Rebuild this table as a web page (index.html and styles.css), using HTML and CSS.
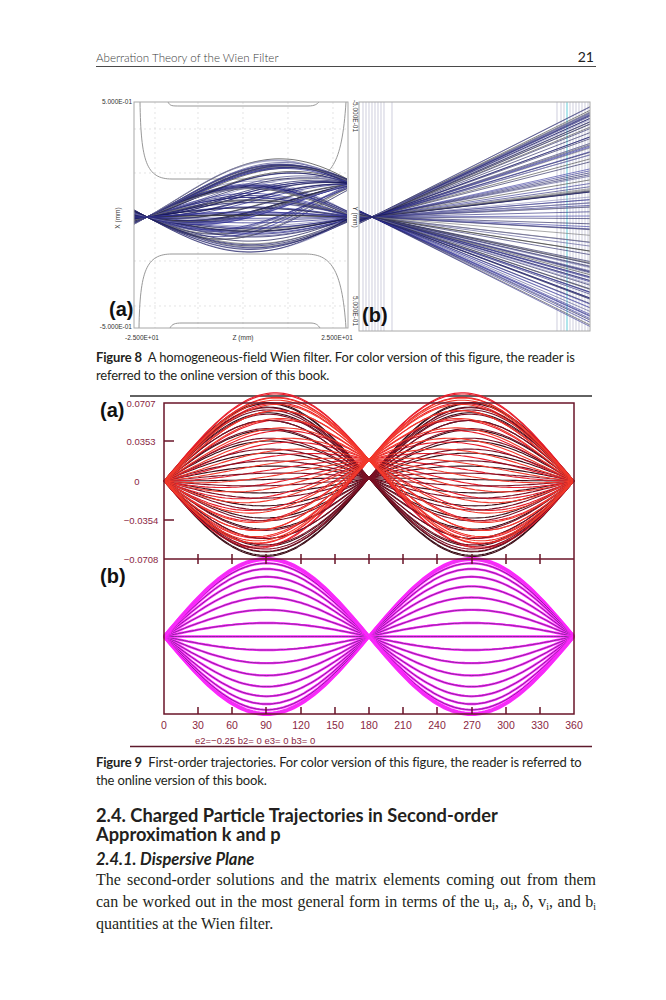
FILE: index.html
```html
<!DOCTYPE html>
<html>
<head>
<meta charset="utf-8">
<title>Aberration Theory of the Wien Filter</title>
<link rel="stylesheet" href="styles.css">
</head>
<body>
<div class="page">
  <header class="running-head">
    <span class="running-title">Aberration Theory of the Wien Filter</span>
    <span class="folio">21</span>
  </header>

  <figure class="figure fig8">
    <svg class="plot plot8" width="500" height="250" viewBox="96 96 500 250" xmlns="http://www.w3.org/2000/svg">
      <!-- (a) left plot -->
      <g class="grid">
        <line x1="155" y1="101" x2="155" y2="327"/>
        <line x1="198" y1="101" x2="198" y2="327"/>
        <line x1="243" y1="101" x2="243" y2="327"/>
        <line x1="288" y1="101" x2="288" y2="327"/>
        <line x1="333" y1="101" x2="333" y2="327"/>
        <line x1="134" y1="128" x2="348" y2="128"/>
        <line x1="134" y1="172" x2="348" y2="172"/>
        <line x1="134" y1="260" x2="348" y2="260"/>
        <line x1="134" y1="305" x2="348" y2="305"/>
      </g>
      <g class="poles">
        <path d="M140,101 C141,160 146,178 172,178 L305,178 C330,178 342,165 346,101"/>
        <path d="M139,327 C140,270 146,253 172,253 L305,253 C330,253 342,266 346,327"/>
        <path d="M168,101 C170,105 172,105 180,105 L308,105 C315,105 317,103 319,101"/>
        <path d="M170,327 C172,323 175,322 182,322 L310,322 C316,322 318,324 320,327"/>
      </g>
      <g id="f8a-traj"></g>
      <rect class="frame8" x="134" y="101" width="214" height="226"/>
      <text class="axlab" x="132" y="102.5" text-anchor="end">5.000E-01</text>
      <text class="axlab" x="132" y="328" text-anchor="end">-5.000E-01</text>
      <text class="axlab" x="142" y="339" text-anchor="middle">-2.500E+01</text>
      <text class="axlab" x="243" y="339" text-anchor="middle">Z (mm)</text>
      <text class="axlab" x="337" y="339" text-anchor="middle">2.500E+01</text>
      <text class="axlab" transform="translate(120,217) rotate(-90)" text-anchor="middle">X (mm)</text>
      <text class="panel" x="109" y="315">(a)</text>

      <!-- (b) right plot -->
      <g class="vlines">
        <line x1="363" y1="101" x2="363" y2="330"/>
        <line x1="366" y1="101" x2="366" y2="330"/>
        <line x1="369" y1="101" x2="369" y2="330"/>
        <line x1="372" y1="101" x2="372" y2="330"/>
        <line x1="375" y1="101" x2="375" y2="330"/>
        <line x1="378" y1="101" x2="378" y2="330"/>
        <line x1="381" y1="101" x2="381" y2="330"/>
        <line x1="384" y1="101" x2="384" y2="330"/>
        <line x1="392" y1="101" x2="392" y2="330"/>
        <line x1="557" y1="101" x2="557" y2="330"/>
        <line x1="561" y1="101" x2="561" y2="330"/>
        <line x1="564" y1="101" x2="564" y2="330"/>
        <line class="cyan" x1="567" y1="101" x2="567" y2="330"/>
        <line x1="570" y1="101" x2="570" y2="330"/>
        <line x1="573" y1="101" x2="573" y2="330"/>
        <line x1="576" y1="101" x2="576" y2="330"/>
        <line x1="579" y1="101" x2="579" y2="330"/>
        <line x1="582" y1="101" x2="582" y2="330"/>
        <line x1="585" y1="101" x2="585" y2="330"/>
        <line x1="588" y1="101" x2="588" y2="330"/>
      </g>
      <g id="f8b-traj"></g>
      <rect class="frame8" x="359" y="101" width="231" height="229"/>
      <text class="axlab" transform="translate(353,115) rotate(90)" text-anchor="middle">-5.000E-01</text>
      <text class="axlab" transform="translate(353,216) rotate(90)" text-anchor="middle">Y (mm)</text>
      <text class="axlab" transform="translate(353,310) rotate(90)" text-anchor="middle">5.000E-01</text>
      <text class="panel" x="362" y="321">(b)</text>
    </svg>
    <figcaption class="caption"><b>Figure 8</b>&nbsp; A homogeneous-field Wien filter. For color version of this figure, the reader is referred to the online version of this book.</figcaption>
  </figure>

  <figure class="figure fig9">
    <svg class="plot plot9" width="500" height="364" viewBox="96 390 500 364" xmlns="http://www.w3.org/2000/svg">
      <line class="rule-top" x1="130" y1="398" x2="592" y2="398"/>
      <g id="f9a-traj"></g>
      <g id="f9b-traj"></g>
      <g class="frame9">
        <rect x="164" y="405" width="410" height="311"/>
        <line x1="164" y1="561" x2="574" y2="561"/>
        <line x1="164" y1="443" x2="174" y2="443"/>
        <line x1="164" y1="522" x2="174" y2="522"/>
        <path d="M198,556 V566 M232,556 V566 M266,556 V566 M301,556 V566 M335,556 V566 M369,556 V566 M403,556 V566 M437,556 V566 M472,556 V566 M506,556 V566 M540,556 V566"/>
        <path d="M198,709 V716 M232,709 V716 M266,709 V716 M301,709 V716 M335,709 V716 M369,709 V716 M403,709 V716 M437,709 V716 M472,709 V716 M506,709 V716 M540,709 V716"/>
      </g>
      <g class="ylab">
        <text x="141" y="409">0.0707</text>
        <text x="141" y="447">0.0353</text>
        <text x="137" y="487">0</text>
        <text x="141" y="526">−0.0354</text>
        <text x="141" y="565">−0.0708</text>
      </g>
      <g class="xlab">
        <text x="164" y="731">0</text>
        <text x="198" y="731">30</text>
        <text x="232" y="731">60</text>
        <text x="266" y="731">90</text>
        <text x="301" y="731">120</text>
        <text x="335" y="731">150</text>
        <text x="369" y="731">180</text>
        <text x="403" y="731">210</text>
        <text x="437" y="731">240</text>
        <text x="472" y="731">270</text>
        <text x="506" y="731">300</text>
        <text x="540" y="731">330</text>
        <text x="574" y="731">360</text>
      </g>
      <text class="params" x="195" y="746">e2=−0.25 b2= 0 e3= 0 b3= 0</text>
      <line class="rule-bottom" x1="130" y1="748.5" x2="592" y2="748.5"/>
      <text class="panel" x="100" y="419">(a)</text>
      <text class="panel" x="100" y="585">(b)</text>
    </svg>
    <figcaption class="caption"><b>Figure 9</b>&nbsp; First-order trajectories. For color version of this figure, the reader is referred to the online version of this book.</figcaption>
  </figure>

  <h2 class="section-title">2.4. Charged Particle Trajectories in Second-order Approximation k and p</h2>
  <h3 class="subsection-title">2.4.1. Dispersive Plane</h3>
  <p class="body-text">The second-order solutions and the matrix elements coming out from them can be worked out in the most general form in terms of the u<sub>i</sub>, a<sub>i</sub>, δ, v<sub>i</sub>, and b<sub>i</sub> quantities at the Wien filter.</p>
</div>
<script src="script.js"></script>
</body>
</html>
```

FILE: styles.css
```css
html, body {
  margin: 0;
  padding: 0;
  background: #ffffff;
}

body {
  color: #231f20;
}

.page {
  width: 500px;
  padding-left: 96px;
}

.running-head {
  display: flex;
  justify-content: space-between;
  align-items: baseline;
  padding-top: 49px;
  line-height: 16px;
  border-bottom: 1.5px solid #4a4a4a;
  font-family: Lato, "Open Sans", sans-serif;
}

.running-title {
  font-size: 11.6px;
  font-weight: 300;
  color: #3c3c3c;
}

.folio {
  font-size: 14px;
  color: #222;
  padding-right: 2px;
}

.figure {
  margin: 0;
}

.fig8 {
  margin-top: 29.5px;
}

.fig9 {
  margin-top: 4px;
}

.plot {
  display: block;
}

.caption {
  font-family: Lato, "Open Sans", sans-serif;
  font-size: 13px;
  line-height: 18px;
  letter-spacing: -0.15px;
  color: #231f20;
  margin: 0;
  padding-top: 1px;
}

.caption b {
  font-weight: 700;
}

/* Figure 8 */
.grid line {
  stroke: #d8d8d8;
  stroke-width: 0.7;
  stroke-dasharray: 2 3;
}

.poles path {
  fill: none;
  stroke: #8c8c8c;
  stroke-width: 0.9;
}

.frame8 {
  fill: none;
  stroke: #a8a8a8;
  stroke-width: 1;
}

.vlines line {
  stroke: #b9b9cf;
  stroke-width: 0.7;
}

.vlines .cyan {
  stroke: #6fd2dc;
  stroke-width: 1.1;
}

.axlab {
  font-family: "Liberation Sans", Arial, sans-serif;
  font-size: 6.5px;
  fill: #333;
}

.panel {
  font-family: "Liberation Sans", Arial, sans-serif;
  font-weight: 700;
  font-size: 20px;
  fill: #111;
}

/* Figure 9 */
.rule-top {
  stroke: #2e2e2e;
  stroke-width: 1.3;
}

.rule-bottom {
  stroke: #5e1a2c;
  stroke-width: 1.3;
}

.frame9 rect,
.frame9 line,
.frame9 path {
  fill: none;
  stroke: #6a1528;
  stroke-width: 1.5;
}

.ylab text {
  font-family: "Liberation Sans", Arial, sans-serif;
  font-size: 9.5px;
  fill: #8a2642;
  text-anchor: middle;
}

.xlab text {
  font-family: "Liberation Sans", Arial, sans-serif;
  font-size: 10.5px;
  fill: #8a2642;
  text-anchor: middle;
}

.params {
  font-family: "Liberation Sans", Arial, sans-serif;
  font-size: 9.5px;
  fill: #8a2642;
}

/* Text */
.section-title {
  font-family: Lato, "Open Sans", sans-serif;
  font-weight: 700;
  font-size: 18.3px;
  line-height: 19px;
  color: #231f20;
  margin: 17px 0 0 0;
  width: 460px;
}

.subsection-title {
  font-family: Lato, "Open Sans", sans-serif;
  font-weight: 700;
  font-style: italic;
  font-size: 16.5px;
  line-height: 20px;
  color: #231f20;
  margin: 5px 0 0 0;
}

.body-text {
  font-family: "Liberation Serif", "Times New Roman", serif;
  font-size: 16px;
  line-height: 22px;
  color: #231f20;
  text-align: justify;
  margin: 0;
}

.body-text sub {
  font-size: 0.6em;
  line-height: 0;
  vertical-align: -0.3em;
}
```

FILE: script.js
```js
(function () {
  var NS = 'http://www.w3.org/2000/svg';
  var seed = 12345;
  function rnd() {
    seed = (seed * 16807) % 2147483647;
    return seed / 2147483647;
  }
  function f(n) { return n.toFixed(1); }
  function add(g, d, stroke, w, op) {
    var p = document.createElementNS(NS, 'path');
    p.setAttribute('d', d);
    p.setAttribute('fill', 'none');
    p.setAttribute('stroke', stroke);
    p.setAttribute('stroke-width', w);
    p.setAttribute('stroke-linejoin', 'round');
    if (op) p.setAttribute('opacity', op);
    g.appendChild(p);
  }

  var navy = ['#1e1e72', '#26268a', '#141450', '#4b4b8c', '#3a3a3a', '#707070', '#2f2f9a', '#8585b5', '#1a1a5e'];

  /* Figure 8 (a): lens-shaped trajectory bundle */
  var ga = document.getElementById('f8a-traj');
  var i, x, u, y, d, a, k, D, slope;
  for (i = 0; i < 110; i++) {
    a = (rnd() * 2 - 1) * 37;
    D = (i % 2 === 0) ? 33 : 0;
    k = 0.94 + rnd() * 0.05;
    slope = a * Math.PI * k / 200;
    d = 'M134,' + f(216 + slope * 13) + ' L147,216';
    for (x = 151; x <= 349; x += 4) {
      u = (x - 147) / 200;
      y = 216 - a * Math.sin(Math.PI * k * u) - D * (1 - Math.cos(Math.PI * u)) / 2;
      d += ' L' + x + ',' + f(y);
    }
    add(ga, d, navy[i % navy.length], 0.7);
  }

  /* Figure 8 (b): fan of straight rays */
  var gb = document.getElementById('f8b-traj');
  var s, ye, y0;
  for (i = 0; i < 120; i++) {
    s = rnd() * 2 - 1;
    s = (s < 0 ? -1 : 1) * Math.pow(Math.abs(s), 0.85);
    ye = 216 + s * 111;
    slope = (ye - 216) / (590 - 372);
    y0 = 216 - slope * (372 - 359);
    add(gb, 'M359,' + f(y0) + ' L372,216 L590,' + f(ye), navy[i % navy.length], 0.6);
  }

  /* Figure 9 */
  var X0 = 164, PX = 410 / 360;
  var rad = Math.PI / 180;
  var g9a = document.getElementById('f9a-traj');
  var fam = [
    { dh: 1.5, c: '#3a0c16' },
    { dh: 10.5, c: '#e81c2a' },
    { dh: 1.5, c: '#7a1024' },
    { dh: 10.5, c: '#f23a2c' }
  ];
  var kk, fi, A, t, deg, amp;
  for (fi = 0; fi < fam.length; fi++) {
    amp = fi >= 2 ? 72 : 77;
    for (kk = -9; kk <= 9; kk++) {
      A = amp * Math.sin((kk * 10 + (fi >= 2 ? 5 : 0)) * rad);
      if (fi >= 2 && kk === 9) continue;
      d = '';
      for (deg = 0; deg <= 360; deg += 3) {
        t = deg * rad;
        x = X0 + deg * PX;
        y = 483 - A * Math.sin(t) - fam[fi].dh * (1 - Math.cos(t));
        d += (deg === 0 ? 'M' : ' L') + f(x) + ',' + f(y);
      }
      add(g9a, d, fam[fi].c, 1.1);
    }
  }

  var g9b = document.getElementById('f9b-traj');
  for (kk = -9; kk <= 9; kk++) {
    A = 78 * Math.sin(kk * 10 * rad);
    d = '';
    for (deg = 0; deg <= 360; deg += 3) {
      t = deg * rad;
      x = X0 + deg * PX;
      y = 638.5 - A * Math.sin(t);
      d += (deg === 0 ? 'M' : ' L') + f(x) + ',' + f(y);
    }
    var edge = Math.abs(kk) >= 8;
    add(g9b, d, '#ff24ff', edge ? 3 : 2.3);
    add(g9b, d, edge ? '#e040e8' : '#7a2c8e', 0.9);
  }
})();
```
